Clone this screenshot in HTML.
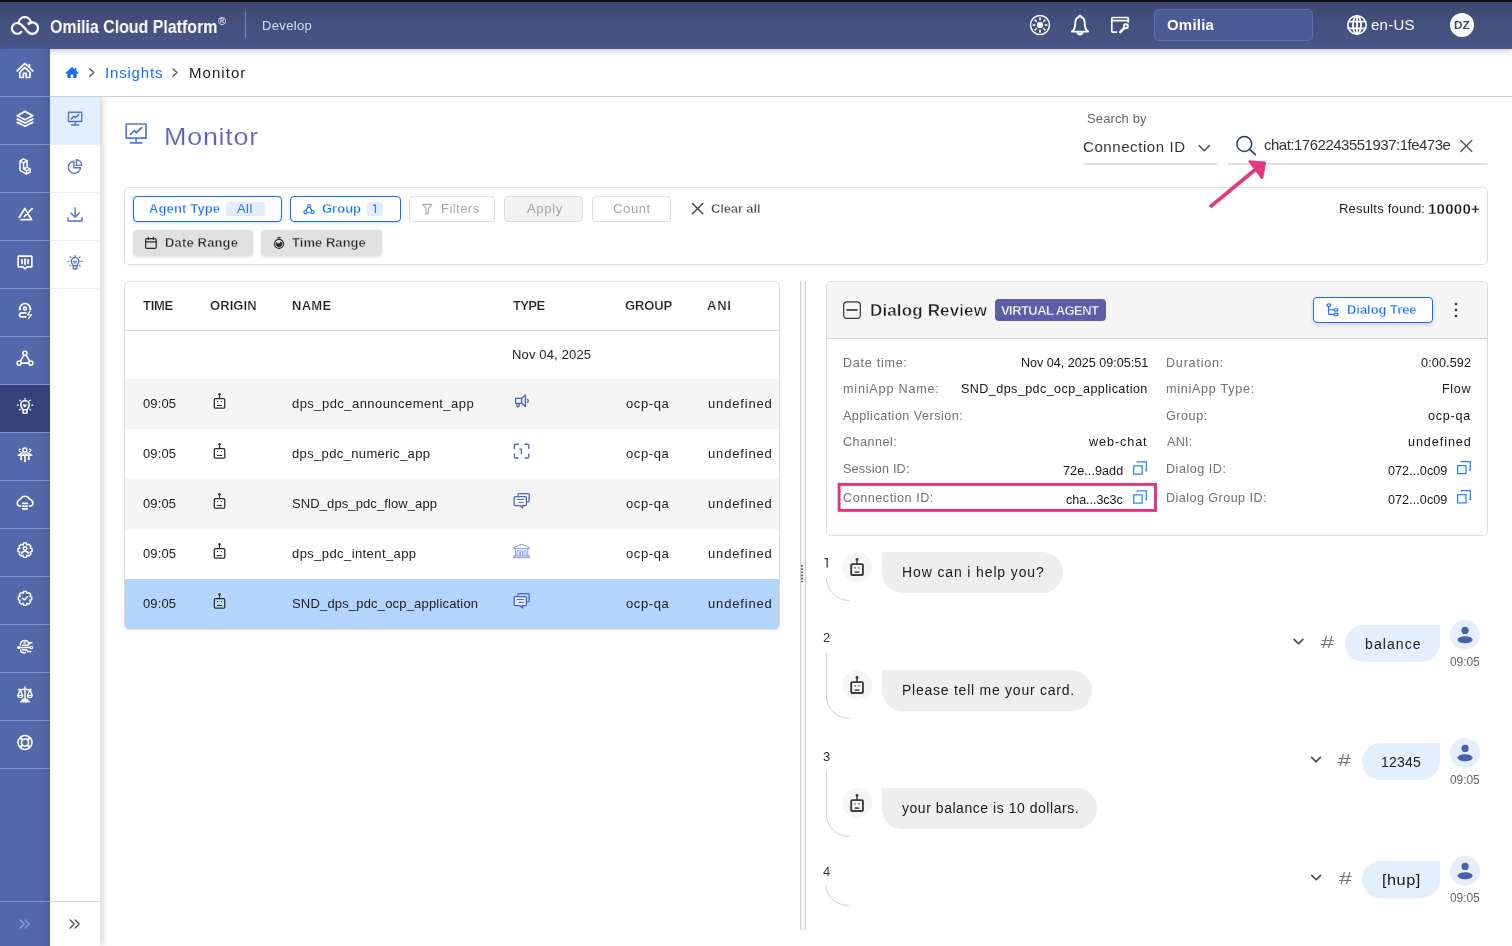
<!DOCTYPE html>
<html lang="en">
<head>
<meta charset="utf-8">
<title>Monitor - Omilia Cloud Platform</title>
<style>
*{box-sizing:border-box;margin:0;padding:0}
html,body{width:1512px;height:946px;overflow:hidden;background:#fff}
body{font-family:"Liberation Sans",sans-serif;color:#222;position:relative;font-size:13px}
.abs{position:absolute}
.t{position:absolute;white-space:nowrap;line-height:1;will-change:transform}
svg{position:absolute;overflow:visible}
/* top bar */
#topbar{position:absolute;left:0;top:0;width:1512px;height:49px;background:linear-gradient(180deg,#3e4971 0%,#44507d 50%,#48568a 100%);box-shadow:0 2px 6px rgba(0,0,0,.22);z-index:5}
#topline{position:absolute;left:0;top:0;width:1512px;height:2px;background:#0c0d14;z-index:6}
/* left nav */
#nav{z-index:6;position:absolute;left:0;top:49px;width:50px;height:897px;background:linear-gradient(90deg,#5469ad 0%,#5367aa 80%,#4c5fa0 100%)}
.ni{position:absolute;left:0;width:50px;height:48px;border-bottom:1px solid #8393c9}
.ni.act{background:#36437a}
#nav2{position:absolute;left:50px;top:97px;width:50px;height:849px;background:#fff;box-shadow:3px 0 7px rgba(0,0,0,.17);clip-path:inset(0 -14px 0 0);z-index:2}
.n2{position:absolute;left:0;width:50px;height:48px;border-bottom:1px solid #eef0fb}
.n2.act{background:#e3eefc}
/* breadcrumb */
#crumb{position:absolute;left:50px;top:49px;width:1462px;height:48px;background:#fff;border-bottom:1px solid #cfcfcf}
/* boxes */
.box{position:absolute;border:1px solid #dcdcdc;border-radius:5px;background:#fff}
.btn{position:absolute;height:26px;border-radius:4px;background:#fff}
</style>
</head>
<body>
<div id="topbar"></div>
<div id="topline"></div>
<div id="nav">
<div class="ni" style="top:0px"></div>
<div class="ni" style="top:48px"></div>
<div class="ni" style="top:96px"></div>
<div class="ni" style="top:144px"></div>
<div class="ni" style="top:192px"></div>
<div class="ni" style="top:240px"></div>
<div class="ni" style="top:288px"></div>
<div class="ni act" style="top:336px"></div>
<div class="ni" style="top:384px"></div>
<div class="ni" style="top:432px"></div>
<div class="ni" style="top:480px"></div>
<div class="ni" style="top:528px"></div>
<div class="ni" style="top:576px"></div>
<div class="ni" style="top:624px"></div>
<div class="ni" style="top:672px"></div>
<div class="abs" style="left:0;top:852px;width:50px;height:1px;background:#8393c9"></div>
<svg style="left:0;top:0" width="50" height="897" viewBox="0 49 50 897" fill="none" stroke="#fff" stroke-width="1.6" stroke-linecap="round" stroke-linejoin="round">
<g transform="translate(25 70.5)" stroke-width="1.7"><path d="M-7.9 0.4 L-0.1 -7.1 L7.9 0.4 M4.4 -6 V-3.6"/><path d="M-0.2 -3.1 L-5.2 1.8 V6.3 Q-5.2 7 -4.5 7 H-1.7 V2.9 H1.2 V7 H4.3 Q5 7 5 6.3 V1.8 Z"/></g>
<g transform="translate(25 118.5)" stroke-width="1.8"><path d="M0 -7.1 L7.7 -2.8 L0 1.2 L-7.7 -2.8 Z M-7.7 0.6 L0 4.5 L7.7 0.6 M-7.7 3.9 L0 7.8 L7.7 3.9"/></g>
<g transform="translate(25 166.5)" stroke-width="1.5"><path d="M-1.5 -7.6 L-5 -5.7 V3.9 L1.4 7.6 L5.3 5.5 V2.6 L2.1 0.7 V-5.7 Z M-5 -5.7 L-1.5 -3.7 L2.1 -5.7 M-1.5 -3.7 V2.2 L1.5 4.4 V7.4 M1.5 4.4 L5.2 2.6 M-1.5 2.2 L2.1 0.7"/></g>
<g transform="translate(25 214.5)" stroke-width="1.7"><path d="M-5.6 2.8 L-0.2 -6.1 L6.6 5.2 H-3.8 M-0.7 2 L7.2 -5.8"/></g>
<g transform="translate(25 262.5) scale(0.88)" stroke-width="1.82"><path d="M-7 -7.2 H7 Q7.8 -7.2 7.8 -6.4 V4.2 Q7.8 5 7 5 H2.2 L0 7.2 L-2.2 5 H-7 Q-7.8 5 -7.8 4.2 V-6.4 Q-7.8 -7.2 -7 -7.2Z"/><path d="M-3.4 -3 V1 M0 -3.8 V1.8 M3.4 -3 V1" stroke-width="2"/></g>
<g transform="translate(25 310.5)" stroke-width="1.6"><path d="M-5.2 -1.4 A5.25 5.6 0 0 1 5.3 -1.4" stroke-width="1.7"/><circle cx="-5.3" cy="-1.2" r="1.15" fill="#fff" stroke="none"/><circle cx="5.4" cy="-1.2" r="1.15" fill="#fff" stroke="none"/><circle cx="-0.1" cy="-2" r="1.5" stroke-width="1.5"/><path d="M0.9 2.3 H-3 Q-5.5 2.5 -5.5 4.6 Q-5.5 6.4 -3.4 6.4 H0.9" stroke-width="1.7"/><path d="M5 0.9 L2.5 4.3 H6.5 L3.5 7.9" stroke-width="1.2"/></g>
<g transform="translate(25 358.5)"><circle cx="0" cy="-5.2" r="2.1"/><circle cx="-5.8" cy="4.6" r="2.1"/><circle cx="5.8" cy="4.6" r="2.1"/><path d="M-1.1 -3.4 L-4.7 2.8 M1.1 -3.4 L4.7 2.8 M-3.7 4.6 H3.7"/></g>
<g transform="translate(25 406.5)"><path d="M-2.2 3.2 C-2.2 1.8 -4.2 0.8 -4.2 -1.6 A4.2 4.2 0 0 1 4.2 -1.6 C4.2 0.8 2.2 1.8 2.2 3.2 Z M-2 3.4 V6 Q-2 6.8 -1.2 6.8 H1.2 Q2 6.8 2 6 V3.4"/><path d="M-1.6 -1.6 H1.6 L0 0.4 Z" fill="#fff" stroke-width="1"/><path d="M0 -8.2 V-7.2 M-5.4 -6.4 L-4.8 -5.8 M5.4 -6.4 L4.8 -5.8 M-7.8 -1.4 H-6.8 M7.8 -1.4 H6.8 M-5.6 3.4 L-4.8 2.8 M5.6 3.4 L4.8 2.8" stroke-width="1.3"/></g>
<g transform="translate(25 454.5)" stroke-width="1.6"><circle cx="-0.1" cy="-4.5" r="2" stroke-width="1.5"/><path d="M-2.3 -1.9 L-6.9 0.8 H6.9 L2.3 -1.9 M-1.6 -0.2 H1.6" stroke-width="1.5"/><path d="M-4.6 -5.3 Q-6.3 -4.9 -5.7 -3.5 Q-5.3 -2.7 -4.3 -2.7 M4.6 -5.3 Q6.3 -4.9 5.7 -3.5 Q5.3 -2.7 4.3 -2.7" stroke-width="1.2"/><path d="M0 1 V6.4 M-3.8 1 V4.2 M3.8 1 V4.2" stroke-width="1.6"/><circle cx="0" cy="6.7" r="1.15" fill="#fff" stroke="none"/><circle cx="-4" cy="4.7" r="1.15" fill="#fff" stroke="none"/><circle cx="3.9" cy="4.6" r="1.15" fill="#fff" stroke="none"/></g>
<g transform="translate(25 502.5)" stroke-width="1.6"><path d="M-4.2 3.5 C-6.5 3.5 -7.7 2 -7.7 0.4 C-7.7 -1.6 -6 -2.8 -4.4 -3.6 C-3.4 -5.4 -1.8 -6.3 -0.1 -6.3 C1.8 -6.3 3.4 -5.4 4.2 -3.8 C6 -3 7.9 -1.8 7.9 0.4 C7.9 2 6.6 3.5 4.4 3.5" stroke-width="1.6"/><path d="M-2.8 0.6 Q0 1.4 2.8 0.6 M-2.8 3.4 Q0 4.2 2.8 3.4 M-2.8 6.1 Q0 6.9 2.8 6.1" stroke-width="1.7" stroke-linecap="butt"/></g>
<g transform="translate(25 550.5) scale(0.93)" stroke-width="1.61"><path d="M-1.5 -8 H1.5 L2.1 -5.8 L4.2 -6.8 L6.4 -4.6 L5.4 -2.5 L7.6 -1.9 V1.1 L5.4 1.7 L6.4 3.8 L4.2 6 L2.1 5 L1.5 7.2 H-1.5 L-2.1 5 L-4.2 6 L-6.4 3.8 L-5.4 1.7 L-7.6 1.1 V-1.9 L-5.4 -2.5 L-6.4 -4.6 L-4.2 -6.8 L-2.1 -5.8 Z" stroke-width="1.5"/><circle cx="0" cy="-2.2" r="1.9" stroke-width="1.5"/><path d="M-3.4 3.6 Q-3.4 0.8 0 0.8 Q3.4 0.8 3.4 3.6" stroke-width="1.5"/></g>
<g transform="translate(25 598.5) scale(0.93)" stroke-width="1.61"><path d="M-1.5 -7.6 H1.5 L2.1 -5.5 L4.1 -6.4 L6.2 -4.3 L5.2 -2.3 L7.2 -1.7 V1.3 L5.2 1.9 L6.2 3.9 L4.1 6 L2.1 5.1 L1.5 7.2 H-1.5 L-2.1 5.1 L-4.1 6 L-6.2 3.9 L-5.2 1.9 L-7.2 1.3 V-1.7 L-5.2 -2.3 L-6.2 -4.3 L-4.1 -6.4 L-2.1 -5.5 Z" stroke-width="1.5"/><path d="M-2.6 -0.2 L-0.8 1.6 L2.8 -1.8" stroke-width="1.5"/></g>
<g transform="translate(25 646.5)" stroke-width="1.6"><path d="M-4.6 -1.4 Q-4.8 -5.9 -0.4 -6 Q3.2 -6 3.8 -2.6 M-2.6 -1.2 H3.2 L4.8 -3.7 H6" stroke-width="1.5"/><circle cx="6.6" cy="-3.8" r="0.95" fill="#fff" stroke="none"/><path d="M-1.2 -3.6 H0.8" stroke-width="1.1"/><path d="M-6 1 H5" stroke-width="1.5"/><circle cx="-6.3" cy="1" r="1.55" fill="#fff" stroke="none"/><circle cx="6.4" cy="1" r="1.25" stroke-width="1.1"/><path d="M-4.4 3.2 Q-4.4 6.3 -1.2 6.3 H0.4 M-2.6 3.3 H1.2 L3 5.1 H5" stroke-width="1.5"/><circle cx="5.6" cy="5.1" r="0.95" fill="#fff" stroke="none"/></g>
<g transform="translate(25 694.5)"><path d="M0 -7.6 V5 M-6.2 -5 H6.2 M-4.8 -4.8 L-7 0.6 M-4.8 -4.8 L-2.6 0.6 M4.8 -4.8 L2.6 0.6 M4.8 -4.8 L7 0.6" stroke-width="1.4"/><path d="M-7.2 0.8 A2.3 2.3 0 0 0 -2.4 0.8 Z M2.4 0.8 A2.3 2.3 0 0 0 7.2 0.8 Z" stroke-width="1.3"/><path d="M-4.4 7.2 L-2 4.4 H2 L4.4 7.2 Z" fill="#fff" stroke-width="1"/></g>
<g transform="translate(25 742.5)"><circle cx="0" cy="0" r="7" stroke-width="1.6"/><circle cx="0" cy="0" r="3.5" stroke-width="1.6"/><path d="M-2.6 -2.6 L-4.8 -4.8 M2.6 -2.6 L4.8 -4.8 M-2.6 2.6 L-4.8 4.8 M2.6 2.6 L4.8 4.8" stroke-width="2.4" stroke-linecap="butt"/></g>
<path d="M20.2 920 L24.2 924 L20.2 928 M25.2 920 L29.2 924 L25.2 928" stroke="#8b9bd6" stroke-width="1.4"/>
</svg>
</div>
<div id="crumb"></div>
<div id="nav2">
<div class="n2 act" style="top:0px"></div>
<div class="n2" style="top:48px"></div>
<div class="n2" style="top:96px"></div>
<div class="n2" style="top:144px"></div>
<div class="abs" style="left:0;top:804px;width:50px;height:1px;background:#d6d6d6"></div>
<svg style="left:0;top:0" width="50" height="849" viewBox="0 0 50 849" fill="none" stroke="#5672c9" stroke-width="1.4" stroke-linecap="round" stroke-linejoin="round">
<g transform="translate(25.1 21.8) scale(0.92)" stroke-width="1.52"><path d="M-7.2 -7.2 H7.2 V3 H-7.2 Z M0 3 V6.6 M-4 6.8 H4" /><path d="M-4.2 0.2 L-1.2 -2.6 L0.4 -1.2 L4 -4.6" stroke-width="1.7"/></g>
<g transform="translate(25.1 69.4) scale(0.87)" stroke-width="1.61"><path d="M-1.4 -6 A7 7 0 1 0 6.2 1.6 H-1.4 Z M1.4 -7.6 V-1.2 H7.6 A6.6 6.6 0 0 0 1.4 -7.6 Z"/></g>
<g transform="translate(25.1 117.6) scale(0.92)" stroke-width="1.52"><path d="M0 -7.6 V2.6 M-4.6 -1.8 L0 2.8 L4.6 -1.8 M-7.6 3.4 V7 H7.6 V3.4"/></g>
<g transform="translate(25.1 165.8) scale(0.91)" stroke-width="1.54"><path d="M-2.2 3.2 C-2.2 1.8 -4.2 0.8 -4.2 -1.6 A4.2 4.2 0 0 1 4.2 -1.6 C4.2 0.8 2.2 1.8 2.2 3.2 Z M-2 3.4 V6 Q-2 6.8 -1.2 6.8 H1.2 Q2 6.8 2 6 V3.4"/><path d="M-1.6 -1.6 H1.6 L0 0.4 Z" fill="#5672c9" stroke-width="1"/><path d="M0 -8.2 V-7.2 M-5.4 -6.4 L-4.8 -5.8 M5.4 -6.4 L4.8 -5.8 M-7.8 -1.4 H-6.8 M7.8 -1.4 H6.8 M-5.6 3.4 L-4.8 2.8 M5.6 3.4 L4.8 2.8" stroke-width="1.3"/></g>
<path d="M20.2 823 L24.2 827 L20.2 831 M25.2 823 L29.2 827 L25.2 831" stroke="#555" stroke-width="1.4"/>
</svg>
</div>

<!-- TOP BAR CONTENT -->
<div id="tb" style="position:absolute;left:0;top:0;width:1512px;height:49px;z-index:7">
<svg style="left:0;top:0" width="1512" height="49" viewBox="0 0 1512 49" fill="none" stroke="#fff" stroke-linecap="round" stroke-linejoin="round">
  <!-- cloud logo -->
  <g stroke-width="2.3">
    <path d="M21.2 31.9 A5.3 5.3 0 1 1 18.9 23.3 C21.6 24 23.6 26.6 25.4 29 C27.4 31.7 29.4 33.8 32.2 33.8 A5.7 5.7 0 1 0 28.7 23.7"/>
    <path d="M18.7 23.2 A6.1 6.1 0 0 1 30.7 21.6 L30.2 23.1 L28.6 23.7"/>
  </g>
  <!-- divider -->
  <path d="M245.5 12 V38" stroke="#6c80c8" stroke-width="1.2"/>
  <!-- sun -->
  <g stroke-width="1.5">
    <circle cx="1040" cy="25" r="9.5"/>
    <circle cx="1040" cy="25" r="3.1" fill="#fff" stroke="none"/>
    <g stroke-width="1.6">
      <path d="M1040 18.1v1.7M1040 30.2v1.7M1033.1 25h1.7M1045.2 25h1.7M1035.1 20.1l1.2 1.2M1043.7 28.7l1.2 1.2M1044.9 20.1l-1.2 1.2M1036.3 28.7l-1.2 1.2"/>
    </g>
  </g>
  <!-- bell -->
  <g stroke-width="1.9">
    <path d="M1080 15.6 C1079.3 15.6 1078.9 16.2 1078.9 17 C1076.2 17.8 1075.3 20.4 1075.3 23 C1075.3 27 1074.6 29.6 1071.9 31.6 H1088.1 C1085.4 29.6 1084.7 27 1084.7 23 C1084.7 20.4 1083.8 17.8 1081.1 17 C1081.1 16.2 1080.7 15.6 1080 15.6Z"/>
    <path d="M1077.3 32.6 A2.8 2.6 0 0 0 1082.7 32.6" fill="#fff"/>
  </g>
  <!-- note w/ key -->
  <g stroke-width="1.7">
    <path d="M1116.3 32.1 H1112.6 Q1111.8 32.1 1111.8 31.3 V18.3 Q1111.8 17.5 1112.6 17.5 H1127.5 Q1128.3 17.5 1128.3 18.3 V22"/>
    <path d="M1111.8 20.6 H1128.3"/>
    <circle cx="1125.9" cy="26.3" r="2" stroke-width="1.9"/>
    <path d="M1124.3 27.9 L1120.3 32.1" stroke-width="2.5"/>
  </g>
  <!-- globe -->
  <g stroke-width="1.7">
    <circle cx="1357" cy="25" r="9.2"/>
    <ellipse cx="1357" cy="25" rx="4" ry="9.2" stroke-width="1.8"/>
    <path d="M1357 15.8V34.2M1348.5 21.6H1365.5M1348.5 28.4H1365.5" stroke-width="1.9"/>
  </g>
</svg>
<span class="t" style="transform:scaleX(0.9012);transform-origin:0 0;top:19px;left:49.8px;font-size:17.7px;font-weight:700;color:#fff">Omilia Cloud Platform</span>
<span class="t" style="top:16px;left:218.3px;font-size:11px;color:#fff">&reg;</span>
<span class="t" style="letter-spacing:0.355px;top:19px;left:261.5px;font-size:13px;color:#d6dcf2">Develop</span>
<div class="abs" style="left:1154px;top:9px;width:159px;height:32px;border-radius:5px;background:#4a5b95;border:1px solid #5d70b4"></div>
<span class="t" style="letter-spacing:0.204px;top:17px;left:1166.67px;font-size:15px;font-weight:700;color:#fff">Omilia</span>
<span class="t" style="letter-spacing:0.26px;top:17px;left:1371.06px;font-size:15px;color:#fff">en-US</span>
<div class="abs" style="left:1449.9px;top:12.5px;width:24.5px;height:24.5px;border-radius:50%;background:#fff"></div>
<span class="t" style="transform:scaleX(1.1044);transform-origin:0 0;top:20px;left:1454.4px;font-size:10.6px;font-weight:700;color:#3a4672">DZ</span>
</div>

<!-- BREADCRUMB CONTENT -->
<div id="bc" style="position:absolute;left:0;top:49px;width:1512px;height:48px;z-index:3">
<svg style="left:0;top:0" width="400" height="48" viewBox="0 49 400 48" fill="none" stroke-linecap="round" stroke-linejoin="round">
  <path d="M72 66.9 L65.4 72.9 L66.3 73.9 L67.4 72.9 V77.1 Q67.4 77.9 68.2 77.9 H70.7 V74.4 H73.3 V77.9 H75.8 Q76.6 77.9 76.6 77.1 V72.9 L77.7 73.9 L78.6 72.9 L76.5 71 V67.9 H75 V69.6 Z" fill="#0f6ff2"/>
  <path d="M89.7 69 L93.8 72.6 L89.7 76.2 M173 69 L177.1 72.6 L173 76.2" stroke="#555" stroke-width="1.3"/>
</svg>
<span class="t" style="letter-spacing:0.812px;top:16px;left:105.31px;font-size:15px;color:#126ff0">Insights</span>
<span class="t" style="letter-spacing:1.051px;top:16px;left:189.32px;font-size:15px;color:#1d1d1d">Monitor</span>
</div>

<!-- TITLE + SEARCH -->
<svg style="left:0;top:97px" width="1512" height="130" viewBox="0 97 1512 130" fill="none" stroke-linecap="round" stroke-linejoin="round">
  <!-- title monitor icon -->
  <g stroke="#5878d0" stroke-width="1.7">
    <path d="M126.2 124 H146 V138.2 H126.2 Z M136.1 138.4 V142.6 M130.4 142.8 H141.8"/>
    <path d="M130.6 134.4 L134.4 130.6 L136.4 132.6 L141.6 127.8" stroke-width="1.9"/>
  </g>
  <!-- select chevron -->
  <path d="M1199.2 145.6 L1204.3 150.8 L1209.4 145.6" stroke="#555" stroke-width="1.5"/>
  <!-- underlines -->
  <path d="M1083.5 163.9 H1218 M1228 163.9 H1487.5" stroke="#dcdcdc" stroke-width="1.9" stroke-linecap="butt"/>
  <!-- magnifier -->
  <circle cx="1244.3" cy="144" r="7.4" stroke="#2b3a67" stroke-width="1.5"/>
  <path d="M1249.8 149.6 L1255.4 154.6" stroke="#2b3a67" stroke-width="1.6"/>
  <!-- clear X -->
  <path d="M1460.8 140.4 L1471.8 151.4 M1471.8 140.4 L1460.8 151.4" stroke="#555" stroke-width="1.4"/>
</svg>
<span class="t" style="transform:scaleX(1.0975);transform-origin:0 0;top:125px;left:164.04px;font-size:24.5px;color:#5f62b6;font-weight:400;letter-spacing:0.7px;-webkit-text-stroke:0.16px #fff">Monitor</span>
<span class="t" style="letter-spacing:0.122px;top:112px;left:1087.0px;font-size:13px;color:#666">Search by</span>
<span class="t" style="letter-spacing:0.582px;top:139px;left:1083.37px;font-size:15px;color:#333">Connection ID</span>
<div class="abs" style="left:1264.3px;top:134px;width:186.4px;height:24px;overflow:hidden"><span class="t" style="top:3px;left:0;font-size:15px;color:#333;letter-spacing:-0.5px">chat:1762243551937:1fe473e3</span></div>

<!-- FILTER BOX -->
<div class="box" style="left:124px;top:187px;width:1364px;height:78px"></div>
<div class="btn" style="left:133px;top:196px;width:149px;border:1.4px solid #0f6ff5;box-shadow:0 1px 3px rgba(13,110,253,.22)"></div>
<div class="abs" style="left:226.3px;top:202.3px;width:38.4px;height:13.4px;border-radius:3px;background:#e1ecfd"></div>
<span class="t" style="letter-spacing:0.137px;top:202px;left:149.14px;font-size:13px;color:#0d6efd;font-weight:700;-webkit-text-stroke:0.35px #fff">Agent Type</span>
<span class="t" style="letter-spacing:0.439px;top:202px;left:237.48px;font-size:13px;color:#2b78f3">All</span>
<div class="btn" style="left:290px;top:196px;width:110.5px;border:1.4px solid #0f6ff5;box-shadow:0 1px 3px rgba(13,110,253,.22)"></div>
<div class="abs" style="left:367px;top:202.3px;width:16.2px;height:13.4px;border-radius:3px;background:#e1ecfd"></div>
<span class="t" style="letter-spacing:0.005px;top:202px;left:322.2px;font-size:13px;color:#0d6efd;font-weight:700;-webkit-text-stroke:0.35px #fff">Group</span>
<div class="btn" style="left:408.5px;top:196px;width:86.5px;border:1px solid #dcdcdc"></div>
<span class="t" style="letter-spacing:0.461px;top:202px;left:440.5px;font-size:13px;color:#a6a6a6">Filters</span>
<div class="btn" style="left:503.5px;top:196px;width:79.5px;border:1px solid #dcdcdc;background:#f2f2f2"></div>
<span class="t" style="letter-spacing:0.67px;top:202px;left:526.57px;font-size:13px;color:#a6a6a6">Apply</span>
<div class="btn" style="left:591.7px;top:196px;width:79.5px;border:1px solid #dcdcdc"></div>
<span class="t" style="letter-spacing:0.629px;top:202px;left:612.5px;font-size:13px;color:#a6a6a6">Count</span>
<span class="t" style="letter-spacing:-0.129px;top:202px;left:711.16px;font-size:13px;color:#444;font-weight:700;-webkit-text-stroke:0.35px #fff">Clear all</span>
<div class="btn" style="left:133px;top:230.3px;height:25.2px;width:119.5px;background:#e0e0e0;box-shadow:0 1.5px 3px rgba(0,0,0,.14)"></div>
<span class="t" style="letter-spacing:0.159px;top:236px;left:164.5px;font-size:13px;color:#2a2a2a;font-weight:700;-webkit-text-stroke:0.35px #e0e0e0">Date Range</span>
<div class="btn" style="left:261px;top:230.3px;height:25.2px;width:121.3px;background:#e0e0e0;box-shadow:0 1.5px 3px rgba(0,0,0,.14)"></div>
<span class="t" style="letter-spacing:0.042px;top:236px;left:292.26px;font-size:13px;color:#2a2a2a;font-weight:700;-webkit-text-stroke:0.35px #e0e0e0">Time Range</span>
<span class="t" style="letter-spacing:0.219px;top:202px;left:1339.0px;font-size:13px;color:#222">Results found:</span>
<span class="t" style="letter-spacing:0.256px;top:201px;left:1427.78px;font-size:15px;color:#111;font-weight:700;-webkit-text-stroke:0.3px #fff">10000+</span>
<svg style="left:0;top:187px" width="1512" height="80" viewBox="0 187 1512 80" fill="none" stroke-linecap="round" stroke-linejoin="round">
  <!-- group icon: triangle of 3 circles -->
  <g stroke="#0d6efd" stroke-width="1.1">
    <circle cx="309" cy="205.9" r="1.35"/><circle cx="305.4" cy="212.1" r="1.55"/><circle cx="312.6" cy="212.1" r="1.55"/>
    <path d="M308 207.2 L306.1 210.4 M310 207.2 L311.9 210.4"/><path d="M307.4 212.7 H310.6" stroke-dasharray="0.9 1"/>
  </g>
  <path d="M372.9 205.2 H375.4 V213" stroke="#2b78f3" stroke-width="1.2" stroke-linecap="butt" stroke-linejoin="miter"/>
  <!-- funnel -->
  <path d="M422.6 204.4 H431.8 L428.4 208.6 V213 L426 214 V208.6 Z" stroke="#a6a6a6" stroke-width="1.1"/>
  <!-- clear all X -->
  <path d="M692.4 203.4 L702.8 213.8 M702.8 203.4 L692.4 213.8" stroke="#444" stroke-width="1.4"/>
  <!-- calendar -->
  <g stroke="#2a2a2a" stroke-width="1.2">
    <rect x="145.6" y="238.6" width="10.6" height="9.8" rx="1.2"/>
    <path d="M145.6 241.8 H156.2 M148.4 237.4 V239.4 M153.4 237.4 V239.4"/>
  </g>
  <!-- stopwatch -->
  <g stroke="#2a2a2a" stroke-width="1.2">
    <circle cx="279" cy="243.8" r="4.5"/>
    <path d="M277.8 237.6 H280.2"/>
    <path d="M279 243.8 L281.2 241.8 A3 3 0 1 1 276.2 242.8 Z" fill="#2a2a2a" stroke-width="0.6"/>
  </g>
  <!-- pink arrow -->
  <path d="M1210 207 L1256 169" stroke="#e5387f" stroke-width="3.6" stroke-linecap="butt"/>
  <path d="M1249.6 161.5 L1264.7 162.7 L1262 177.7 Z" fill="#e5387f" stroke="#e5387f" stroke-width="2.6" stroke-linejoin="round"/>
</svg>
<!-- TABLE -->
<div class="box" style="left:124px;top:281px;width:656px;height:349px;overflow:hidden">
<div class="abs" style="left:0;top:48px;width:654px;height:1px;background:#d9d9d9"></div>
<div class="abs" style="left:0;top:97px;width:654px;height:50px;background:#f5f5f5"></div>
<div class="abs" style="left:0;top:147px;width:654px;height:50px;background:#fff"></div>
<div class="abs" style="left:0;top:197px;width:654px;height:50px;background:#f5f5f5"></div>
<div class="abs" style="left:0;top:247px;width:654px;height:50px;background:#fff"></div>
<div class="abs" style="left:0;top:297px;width:654px;height:51px;background:#b3d4fc"></div>
</div>
<span class="t" style="letter-spacing:-0.295px;top:299px;left:143.28px;font-size:13px;color:#222;font-weight:700;-webkit-text-stroke:0.22px #fff">TIME</span>
<span class="t" style="letter-spacing:0.067px;top:299px;left:210.39px;font-size:13px;color:#222;font-weight:700;-webkit-text-stroke:0.22px #fff">ORIGIN</span>
<span class="t" style="letter-spacing:0.296px;top:299px;left:291.5px;font-size:13px;color:#222;font-weight:700;-webkit-text-stroke:0.22px #fff">NAME</span>
<span class="t" style="letter-spacing:-0.628px;top:299px;left:512.78px;font-size:13px;color:#222;font-weight:700;-webkit-text-stroke:0.22px #fff">TYPE</span>
<span class="t" style="letter-spacing:-0.146px;top:299px;left:625.39px;font-size:13px;color:#222;font-weight:700;-webkit-text-stroke:0.22px #fff">GROUP</span>
<span class="t" style="letter-spacing:0.752px;top:299px;left:706.99px;font-size:13px;color:#222;font-weight:700;-webkit-text-stroke:0.22px #fff">ANI</span>
<span class="t" style="letter-spacing:0.154px;top:348px;left:512.0px;font-size:13px;color:#222">Nov 04, 2025</span>
<span class="t" style="letter-spacing:0.119px;top:397px;left:142.56px;font-size:13px;color:#222">09:05</span>
<span class="t" style="letter-spacing:0.449px;top:397px;left:292.44px;font-size:13px;color:#222">dps_pdc_announcement_app</span>
<span class="t" style="letter-spacing:0.602px;top:397px;left:625.92px;font-size:13px;color:#222">ocp-qa</span>
<span class="t" style="letter-spacing:0.837px;top:397px;left:708.0px;font-size:13px;color:#222">undefined</span>
<span class="t" style="letter-spacing:0.119px;top:447px;left:142.57px;font-size:13px;color:#222">09:05</span>
<span class="t" style="letter-spacing:0.357px;top:447px;left:292.43px;font-size:13px;color:#222">dps_pdc_numeric_app</span>
<span class="t" style="letter-spacing:0.603px;top:447px;left:625.91px;font-size:13px;color:#222">ocp-qa</span>
<span class="t" style="letter-spacing:0.836px;top:447px;left:708.0px;font-size:13px;color:#222">undefined</span>
<span class="t" style="letter-spacing:0.119px;top:497px;left:142.56px;font-size:13px;color:#222">09:05</span>
<span class="t" style="letter-spacing:0.1px;top:497px;left:291.5px;font-size:13px;color:#222">SND_dps_pdc_flow_app</span>
<span class="t" style="letter-spacing:0.602px;top:497px;left:625.92px;font-size:13px;color:#222">ocp-qa</span>
<span class="t" style="letter-spacing:0.837px;top:497px;left:708.0px;font-size:13px;color:#222">undefined</span>
<span class="t" style="letter-spacing:0.119px;top:547px;left:142.57px;font-size:13px;color:#222">09:05</span>
<span class="t" style="letter-spacing:0.409px;top:547px;left:292.43px;font-size:13px;color:#222">dps_pdc_intent_app</span>
<span class="t" style="letter-spacing:0.603px;top:547px;left:625.91px;font-size:13px;color:#222">ocp-qa</span>
<span class="t" style="letter-spacing:0.836px;top:547px;left:708.0px;font-size:13px;color:#222">undefined</span>
<span class="t" style="letter-spacing:0.115px;top:597px;left:142.58px;font-size:13px;color:#222">09:05</span>
<span class="t" style="letter-spacing:0.178px;top:597px;left:291.5px;font-size:13px;color:#222">SND_dps_pdc_ocp_application</span>
<span class="t" style="letter-spacing:0.599px;top:597px;left:625.92px;font-size:13px;color:#222">ocp-qa</span>
<span class="t" style="letter-spacing:0.836px;top:597px;left:708.0px;font-size:13px;color:#222">undefined</span>
<svg style="left:0;top:379px" width="800" height="252" viewBox="0 379 800 252" fill="none" stroke-linecap="round" stroke-linejoin="round">
<g transform="translate(0 0)"><rect x="213.4" y="397.8" width="12.3" height="11.3" rx="2" fill="#fff" stroke="#fff" stroke-width="1.6"/><path d="M219.5 398.6 V394.4" stroke="#fff" stroke-width="3"/><circle cx="219.5" cy="394.1" r="2.1" fill="#fff"/><rect x="214.3" y="398.7" width="10.5" height="9.5" rx="1.2" fill="#fff" stroke="#2b2b2b" stroke-width="1.3"/><path d="M219.5 398.6 V394.6" stroke="#2b2b2b" stroke-width="1.2"/><circle cx="219.5" cy="394.2" r="1.2" fill="#2b2b2b"/><circle cx="217.6" cy="401.6" r="0.65" fill="#2b2b2b"/><circle cx="221.4" cy="401.6" r="0.65" fill="#2b2b2b"/><path d="M217.4 405.5 H221.6" stroke="#2b2b2b" stroke-width="1.15"/></g>
<g transform="translate(0 50)"><rect x="214.3" y="398.7" width="10.5" height="9.5" rx="1.2" fill="#fff" stroke="#2b2b2b" stroke-width="1.3"/><path d="M219.5 398.6 V394.6" stroke="#2b2b2b" stroke-width="1.2"/><circle cx="219.5" cy="394.2" r="1.2" fill="#2b2b2b"/><circle cx="217.6" cy="401.6" r="0.65" fill="#2b2b2b"/><circle cx="221.4" cy="401.6" r="0.65" fill="#2b2b2b"/><path d="M217.4 405.5 H221.6" stroke="#2b2b2b" stroke-width="1.15"/></g>
<g transform="translate(0 100)"><rect x="213.4" y="397.8" width="12.3" height="11.3" rx="2" fill="#fff" stroke="#fff" stroke-width="1.6"/><path d="M219.5 398.6 V394.4" stroke="#fff" stroke-width="3"/><circle cx="219.5" cy="394.1" r="2.1" fill="#fff"/><rect x="214.3" y="398.7" width="10.5" height="9.5" rx="1.2" fill="#fff" stroke="#2b2b2b" stroke-width="1.3"/><path d="M219.5 398.6 V394.6" stroke="#2b2b2b" stroke-width="1.2"/><circle cx="219.5" cy="394.2" r="1.2" fill="#2b2b2b"/><circle cx="217.6" cy="401.6" r="0.65" fill="#2b2b2b"/><circle cx="221.4" cy="401.6" r="0.65" fill="#2b2b2b"/><path d="M217.4 405.5 H221.6" stroke="#2b2b2b" stroke-width="1.15"/></g>
<g transform="translate(0 150)"><rect x="214.3" y="398.7" width="10.5" height="9.5" rx="1.2" fill="#fff" stroke="#2b2b2b" stroke-width="1.3"/><path d="M219.5 398.6 V394.6" stroke="#2b2b2b" stroke-width="1.2"/><circle cx="219.5" cy="394.2" r="1.2" fill="#2b2b2b"/><circle cx="217.6" cy="401.6" r="0.65" fill="#2b2b2b"/><circle cx="221.4" cy="401.6" r="0.65" fill="#2b2b2b"/><path d="M217.4 405.5 H221.6" stroke="#2b2b2b" stroke-width="1.15"/></g>
<g transform="translate(0 200)"><rect x="213.4" y="397.8" width="12.3" height="11.3" rx="2" fill="#c0e2fe" stroke="#c0e2fe" stroke-width="1.6"/><path d="M219.5 398.6 V394.4" stroke="#c0e2fe" stroke-width="3"/><circle cx="219.5" cy="394.1" r="2.1" fill="#c0e2fe"/><rect x="214.3" y="398.7" width="10.5" height="9.5" rx="1.2" fill="#b9dafd" stroke="#2b2b2b" stroke-width="1.3"/><path d="M219.5 398.6 V394.6" stroke="#2b2b2b" stroke-width="1.2"/><circle cx="219.5" cy="394.2" r="1.2" fill="#2b2b2b"/><circle cx="217.6" cy="401.6" r="0.65" fill="#2b2b2b"/><circle cx="221.4" cy="401.6" r="0.65" fill="#2b2b2b"/><path d="M217.4 405.5 H221.6" stroke="#2b2b2b" stroke-width="1.15"/></g>
<g stroke="#4863c4" stroke-width="1.3"><path d="M515.6 398.4 H521.6 V403.3 H515.6 Z" /><path d="M521.8 398.5 L525.4 394.9 V406.5 L521.8 403.2" /><path d="M516.9 403.6 V405.8 Q516.9 406.9 518 406.9 Q519.1 406.9 519.1 405.8 V403.6" /><path d="M527.6 399.2 Q529 400.9 527.6 402.6" /></g>
<g stroke="#4a68c8" stroke-width="1.4"><path d="M514.4 448.4 V445.4 Q514.4 444.2 515.6 444.2 H518.2 M525 444.2 H527.6 Q528.8 444.2 528.8 445.4 V448.4 M528.8 454 V456.8 Q528.8 458 527.6 458 H525 M518.2 458 H515.6 Q514.4 458 514.4 456.8 V454"/><path d="M519.8 449.2 H521.4 V453.8" stroke-width="1.3"/></g>
<g transform="translate(0 0)" stroke="#4a66c6" stroke-width="1.3"><path d="M517.9 495.6 V494.6 Q517.9 493.6 518.9 493.6 H528.2 Q529.2 493.6 529.2 494.6 V500.8 Q529.2 501.8 528.2 501.8 H527.2"/><path d="M515.2 496.6 H525.4 Q526.4 496.6 526.4 497.6 V504.6 Q526.4 505.6 525.4 505.6 H522.2 L522.8 508 L519.8 505.6 H515.2 Q514.2 505.6 514.2 504.6 V497.6 Q514.2 496.6 515.2 496.6Z" fill="rgba(255,255,255,.55)"/><path d="M517.4 499.5 H523.2 M519 502.5 H523.2" stroke-width="1.2"/></g>
<g stroke="#7d92da" stroke-width="0.9"><path d="M514.4 547.4 L521.6 544.2 L528.8 547.4 M514.6 548.6 H528.6 M514.2 547.4 V548.6 M529 547.4 V548.6 M515.4 549 V555.6 M527.8 549 V555.6 M513.8 556 H529.4 M513.6 557.6 H529.6 M514 556 Q513.2 556.8 513.8 557.6 M529.2 556 Q530 556.8 529.4 557.6"/><path d="M517 555.6 V551.6 Q517 550.4 518.1 550.4 Q519.2 550.4 519.2 551.6 V555.6 M520.5 555.6 V551.6 Q520.5 550.4 521.6 550.4 Q522.7 550.4 522.7 551.6 V555.6 M524 555.6 V551.6 Q524 550.4 525.1 550.4 Q526.2 550.4 526.2 551.6 V555.6"/></g>
<g transform="translate(0 100)" stroke="#4a66c6" stroke-width="1.3"><path d="M517.9 495.6 V494.6 Q517.9 493.6 518.9 493.6 H528.2 Q529.2 493.6 529.2 494.6 V500.8 Q529.2 501.8 528.2 501.8 H527.2"/><path d="M515.2 496.6 H525.4 Q526.4 496.6 526.4 497.6 V504.6 Q526.4 505.6 525.4 505.6 H522.2 L522.8 508 L519.8 505.6 H515.2 Q514.2 505.6 514.2 504.6 V497.6 Q514.2 496.6 515.2 496.6Z" fill="rgba(255,255,255,.55)"/><path d="M517.4 499.5 H523.2 M519 502.5 H523.2" stroke-width="1.2"/></g>
</svg>
<!-- SPLITTER -->
<div class="abs" style="left:800px;top:281px;width:6px;height:649px;background:#f7f7f7;border-left:1px solid #cfcfcf;border-right:1px solid #cfcfcf"></div>
<svg style="left:798px;top:562px" width="8" height="22" viewBox="798 562 8 22"><path d="M802 565 V582" stroke="#333" stroke-width="1.6" stroke-dasharray="1.6 1.6" fill="none"/></svg>
<!-- DIALOG PANEL -->
<div class="box" style="left:826px;top:281px;width:1662px;height:254.5px;width:662px;overflow:hidden"><div class="abs" style="left:0;top:0;width:660px;height:56.5px;background:#f5f5f5;border-bottom:1px solid #d4d4d4"></div></div>
<span class="t" style="letter-spacing:0.138px;top:302px;left:870.15px;font-size:17px;color:#1c1c1c;font-weight:700;-webkit-text-stroke:0.45px #f5f5f5">Dialog Review</span>
<div class="abs" style="left:995px;top:299.4px;width:110.6px;height:21.4px;border-radius:4px;background:#5c5fa8"></div>
<span class="t" style="letter-spacing:-0.565px;top:304px;left:1000.65px;font-size:13px;color:#fff;font-weight:700;-webkit-text-stroke:0.35px #5c5fa8">VIRTUAL AGENT</span>
<div class="abs" style="left:1313.4px;top:297px;width:119.2px;height:25.8px;border-radius:4px;background:#fff;border:1.4px solid #0d6efd;box-shadow:0 2px 4px rgba(0,0,0,.14)"></div>
<span class="t" style="letter-spacing:-0.049px;top:303px;left:1347.0px;font-size:13px;color:#0d6efd;font-weight:700;-webkit-text-stroke:0.35px #fff">Dialog Tree</span>
<span class="t" style="letter-spacing:0.719px;top:357px;left:843.0px;font-size:12.6px;color:#707070">Date time:</span>
<span class="t" style="letter-spacing:-0.014px;top:357px;left:1020.75px;font-size:12.6px;color:#161616">Nov 04, 2025 09:05:51</span>
<span class="t" style="letter-spacing:0.815px;top:383px;left:843.0px;font-size:12.6px;color:#707070">miniApp Name:</span>
<span class="t" style="letter-spacing:0.406px;top:383px;left:961.25px;font-size:12.6px;color:#161616">SND_dps_pdc_ocp_application</span>
<span class="t" style="letter-spacing:0.475px;top:410px;left:843.01px;font-size:12.6px;color:#707070">Application Version:</span>
<span class="t" style="letter-spacing:0.489px;top:436px;left:842.52px;font-size:12.6px;color:#707070">Channel:</span>
<span class="t" style="letter-spacing:0.927px;top:436px;left:1089.28px;font-size:12.6px;color:#161616">web-chat</span>
<span class="t" style="letter-spacing:0.199px;top:463px;left:843.0px;font-size:12.6px;color:#707070">Session ID:</span>
<span class="t" style="letter-spacing:0.076px;top:465px;left:1063.07px;font-size:12.6px;color:#161616">72e...9add</span>
<span class="t" style="letter-spacing:0.543px;top:492px;left:842.52px;font-size:12.6px;color:#707070">Connection ID:</span>
<span class="t" style="letter-spacing:-0.067px;top:494px;left:1066.32px;font-size:12.6px;color:#161616">cha...3c3c</span>
<span class="t" style="letter-spacing:0.77px;top:357px;left:1166.0px;font-size:12.6px;color:#707070">Duration:</span>
<span class="t" style="letter-spacing:0.138px;top:357px;left:1420.91px;font-size:12.6px;color:#161616">0:00.592</span>
<span class="t" style="letter-spacing:0.716px;top:383px;left:1166.0px;font-size:12.6px;color:#707070">miniApp Type:</span>
<span class="t" style="letter-spacing:0.664px;top:383px;left:1442.01px;font-size:12.6px;color:#161616">Flow</span>
<span class="t" style="letter-spacing:0.539px;top:410px;left:1166.49px;font-size:12.6px;color:#707070">Group:</span>
<span class="t" style="letter-spacing:0.772px;top:410px;left:1428.21px;font-size:12.6px;color:#161616">ocp-qa</span>
<span class="t" style="letter-spacing:0.243px;top:436px;left:1166.51px;font-size:12.6px;color:#707070">ANI:</span>
<span class="t" style="letter-spacing:0.932px;top:436px;left:1408.31px;font-size:12.6px;color:#161616">undefined</span>
<span class="t" style="letter-spacing:0.512px;top:463px;left:1166.0px;font-size:12.6px;color:#707070">Dialog ID:</span>
<span class="t" style="letter-spacing:0.056px;top:465px;left:1388.11px;font-size:12.6px;color:#161616">072...0c09</span>
<span class="t" style="letter-spacing:0.447px;top:492px;left:1166.0px;font-size:12.6px;color:#707070">Dialog Group ID:</span>
<span class="t" style="letter-spacing:0.056px;top:494px;left:1388.11px;font-size:12.6px;color:#161616">072...0c09</span>
<svg style="left:800px;top:281px" width="712" height="260" viewBox="800 281 712 260" fill="none" stroke-linecap="round" stroke-linejoin="round">
<rect x="843.7" y="301.8" width="16.6" height="16.6" rx="3.2" stroke="#333" stroke-width="1.2"/><path d="M847 310.1 H857" stroke="#222" stroke-width="1.5"/>
<g stroke="#0d6efd" stroke-width="1.1"><ellipse cx="1329" cy="305.2" rx="2.1" ry="1.3"/><ellipse cx="1335.9" cy="309.8" rx="2.1" ry="1.3"/><ellipse cx="1335.9" cy="314.4" rx="2.1" ry="1.3"/><path d="M1328.6 306.6 V313.4 Q1328.6 314.4 1329.6 314.4 H1333.6 M1328.6 309.8 H1333.6"/></g>
<g fill="#333"><circle cx="1456" cy="304" r="1.35"/><circle cx="1456" cy="310" r="1.35"/><circle cx="1456" cy="316" r="1.35"/></g>
<g stroke="#2389f5" stroke-width="1.25" stroke-linejoin="miter" stroke-linecap="butt"><g transform="translate(0 0)"><path d="M1133.7 465.9 H1142.1 V474 H1133.7 Z M1137.4 462.9 V461.8 H1146.4 V470.5 H1145.2"/></g><g transform="translate(0 29)"><path d="M1133.7 465.9 H1142.1 V474 H1133.7 Z M1137.4 462.9 V461.8 H1146.4 V470.5 H1145.2"/></g><g transform="translate(323.9 -0.3)"><path d="M1133.7 465.9 H1142.1 V474 H1133.7 Z M1137.4 462.9 V461.8 H1146.4 V470.5 H1145.2"/></g><g transform="translate(323.9 28.8)"><path d="M1133.7 465.9 H1142.1 V474 H1133.7 Z M1137.4 462.9 V461.8 H1146.4 V470.5 H1145.2"/></g></g>
<rect x="839.1" y="484.4" width="316.4" height="26" stroke="#e3327a" stroke-width="2.9" stroke-linejoin="miter"/>
</svg>
<!-- CHAT -->
<div class="abs" style="left:882.2px;top:552px;width:181.0px;height:41px;background:#eeeeee;border-radius:1px 20.5px 20.5px 20.5px"></div>
<span class="t" style="letter-spacing:0.871px;top:565px;left:901.67px;font-size:14px;color:#1a1a1a">How can i help you?</span>
<div class="abs" style="left:842px;top:552px;width:30px;height:30px;border-radius:50%;background:#f5f5f5"></div>
<div class="abs" style="left:882.2px;top:670px;width:210.1px;height:41px;background:#eeeeee;border-radius:1px 20.5px 20.5px 20.5px"></div>
<span class="t" style="letter-spacing:0.753px;top:683px;left:901.67px;font-size:14px;color:#1a1a1a">Please tell me your card.</span>
<div class="abs" style="left:842px;top:670px;width:30px;height:30px;border-radius:50%;background:#f5f5f5"></div>
<div class="abs" style="left:882.2px;top:788px;width:215.0px;height:41px;background:#eeeeee;border-radius:1px 20.5px 20.5px 20.5px"></div>
<span class="t" style="letter-spacing:0.537px;top:801px;left:902.38px;font-size:14px;color:#1a1a1a">your balance is 10 dollars.</span>
<div class="abs" style="left:842px;top:788px;width:30px;height:30px;border-radius:50%;background:#f5f5f5"></div>
<div class="abs" style="left:1344.7px;top:625px;width:95.3px;height:37px;background:#e4effe;border-radius:18.5px 1px 18.5px 18.5px"></div>
<span class="t" style="letter-spacing:1.092px;top:637px;left:1365.0px;font-size:14px;color:#1a1a1a">balance</span>
<div class="abs" style="left:1450px;top:620px;width:30px;height:30px;border-radius:50%;background:#e6eefb"></div>
<span class="t" style="letter-spacing:-0.088px;top:656px;left:1450.35px;font-size:12px;color:#666">09:05</span>
<div class="abs" style="left:1362.2px;top:743px;width:77.8px;height:37px;background:#e4effe;border-radius:18.5px 1px 18.5px 18.5px"></div>
<span class="t" style="letter-spacing:0.236px;top:755px;left:1381.0px;font-size:14px;color:#1a1a1a">12345</span>
<div class="abs" style="left:1450px;top:738px;width:30px;height:30px;border-radius:50%;background:#e6eefb"></div>
<span class="t" style="letter-spacing:-0.088px;top:774px;left:1450.35px;font-size:12px;color:#666">09:05</span>
<div class="abs" style="left:1362.2px;top:861px;width:77.8px;height:37px;background:#e4effe;border-radius:18.5px 1px 18.5px 18.5px"></div>
<span class="t" style="transform:scaleX(1.14);transform-origin:0 0;top:873px;left:1381.74px;font-size:14.3px;color:#1a1a1a;letter-spacing:0.45px">[hup]</span>
<div class="abs" style="left:1450px;top:856px;width:30px;height:30px;border-radius:50%;background:#e6eefb"></div>
<span class="t" style="letter-spacing:-0.088px;top:892px;left:1450.35px;font-size:12px;color:#666">09:05</span>
<span class="t" style="letter-spacing:2.282px;top:631px;left:822.5px;font-size:13px;color:#333">2</span>
<span class="t" style="letter-spacing:3.366px;top:750px;left:823.13px;font-size:13px;color:#333">3</span>
<span class="t" style="letter-spacing:3.494px;top:865px;left:823.14px;font-size:13px;color:#333">4</span>
<span class="t" style="transform:scaleX(1.4062);transform-origin:0 0;top:634px;left:1321.0px;font-size:16.5px;color:#777;font-weight:400">#</span>
<span class="t" style="transform:scaleX(1.4062);transform-origin:0 0;top:752px;left:1338.0px;font-size:16.5px;color:#777;font-weight:400">#</span>
<span class="t" style="transform:scaleX(1.4062);transform-origin:0 0;top:870px;left:1339.0px;font-size:16.5px;color:#777;font-weight:400">#</span>
<svg style="left:800px;top:540px" width="712" height="406" viewBox="800 540 712 406" fill="none" stroke-linecap="round" stroke-linejoin="round">
<path d="M826.4 578 A22.6 22.5 0 0 0 849 600.5" stroke="#cfcfcf" stroke-width="1"/>
<path d="M826.4 653.3 V695.9 A22.6 22.6 0 0 0 849 718.5" stroke="#cfcfcf" stroke-width="1"/>
<path d="M826.4 771.3 V813.9 A22.6 22.6 0 0 0 849 836.5" stroke="#cfcfcf" stroke-width="1"/>
<path d="M826.4 887 A22.6 18.5 0 0 0 849 905.5" stroke="#cfcfcf" stroke-width="1"/>
<g transform="translate(0 0)" stroke="#3a3a3a"><rect x="851.2" y="564.1" width="11.7" height="10.9" rx="0.9" stroke-width="1.9" fill="#fafafa"/><path d="M857 563.4 V559.8" stroke-width="1.5"/><circle cx="857" cy="559.4" r="1.4" fill="#3a3a3a" stroke="none"/><path d="M854.4 567.9 H855.8 M858.2 567.9 H859.6" stroke-width="1.2" stroke-linecap="butt"/><path d="M854.6 572.1 H859.4" stroke-width="1.5" stroke-linecap="butt"/></g>
<g transform="translate(0 118)" stroke="#3a3a3a"><rect x="851.2" y="564.1" width="11.7" height="10.9" rx="0.9" stroke-width="1.9" fill="#fafafa"/><path d="M857 563.4 V559.8" stroke-width="1.5"/><circle cx="857" cy="559.4" r="1.4" fill="#3a3a3a" stroke="none"/><path d="M854.4 567.9 H855.8 M858.2 567.9 H859.6" stroke-width="1.2" stroke-linecap="butt"/><path d="M854.6 572.1 H859.4" stroke-width="1.5" stroke-linecap="butt"/></g>
<g transform="translate(0 236)" stroke="#3a3a3a"><rect x="851.2" y="564.1" width="11.7" height="10.9" rx="0.9" stroke-width="1.9" fill="#fafafa"/><path d="M857 563.4 V559.8" stroke-width="1.5"/><circle cx="857" cy="559.4" r="1.4" fill="#3a3a3a" stroke="none"/><path d="M854.4 567.9 H855.8 M858.2 567.9 H859.6" stroke-width="1.2" stroke-linecap="butt"/><path d="M854.6 572.1 H859.4" stroke-width="1.5" stroke-linecap="butt"/></g>
<circle cx="1465.1" cy="630.4" r="3.6" fill="#4a5fad"/><ellipse cx="1465.1" cy="639.8" rx="7.6" ry="3.5" fill="#4a5fad"/>
<path d="M1294.1 639.4 L1298.5 643.8 L1302.9 639.4" stroke="#444" stroke-width="1.6"/>
<circle cx="1465.1" cy="748.4" r="3.6" fill="#4a5fad"/><ellipse cx="1465.1" cy="757.8" rx="7.6" ry="3.5" fill="#4a5fad"/>
<path d="M1311.6 757.4 L1316 761.8 L1320.4 757.4" stroke="#444" stroke-width="1.6"/>
<circle cx="1465.1" cy="866.4" r="3.6" fill="#4a5fad"/><ellipse cx="1465.1" cy="875.8" rx="7.6" ry="3.5" fill="#4a5fad"/>
<path d="M1311.8 875.4 L1316.2 879.8 L1320.6000000000001 875.4" stroke="#444" stroke-width="1.6"/>
</svg>
<svg style="left:820px;top:555px" width="12" height="16" viewBox="820 555 12 16" fill="none"><path d="M824.5 558.7 H827.2 V567.6" stroke="#333" stroke-width="1.25"/></svg>
<!--MAIN-->
</body>
</html>
